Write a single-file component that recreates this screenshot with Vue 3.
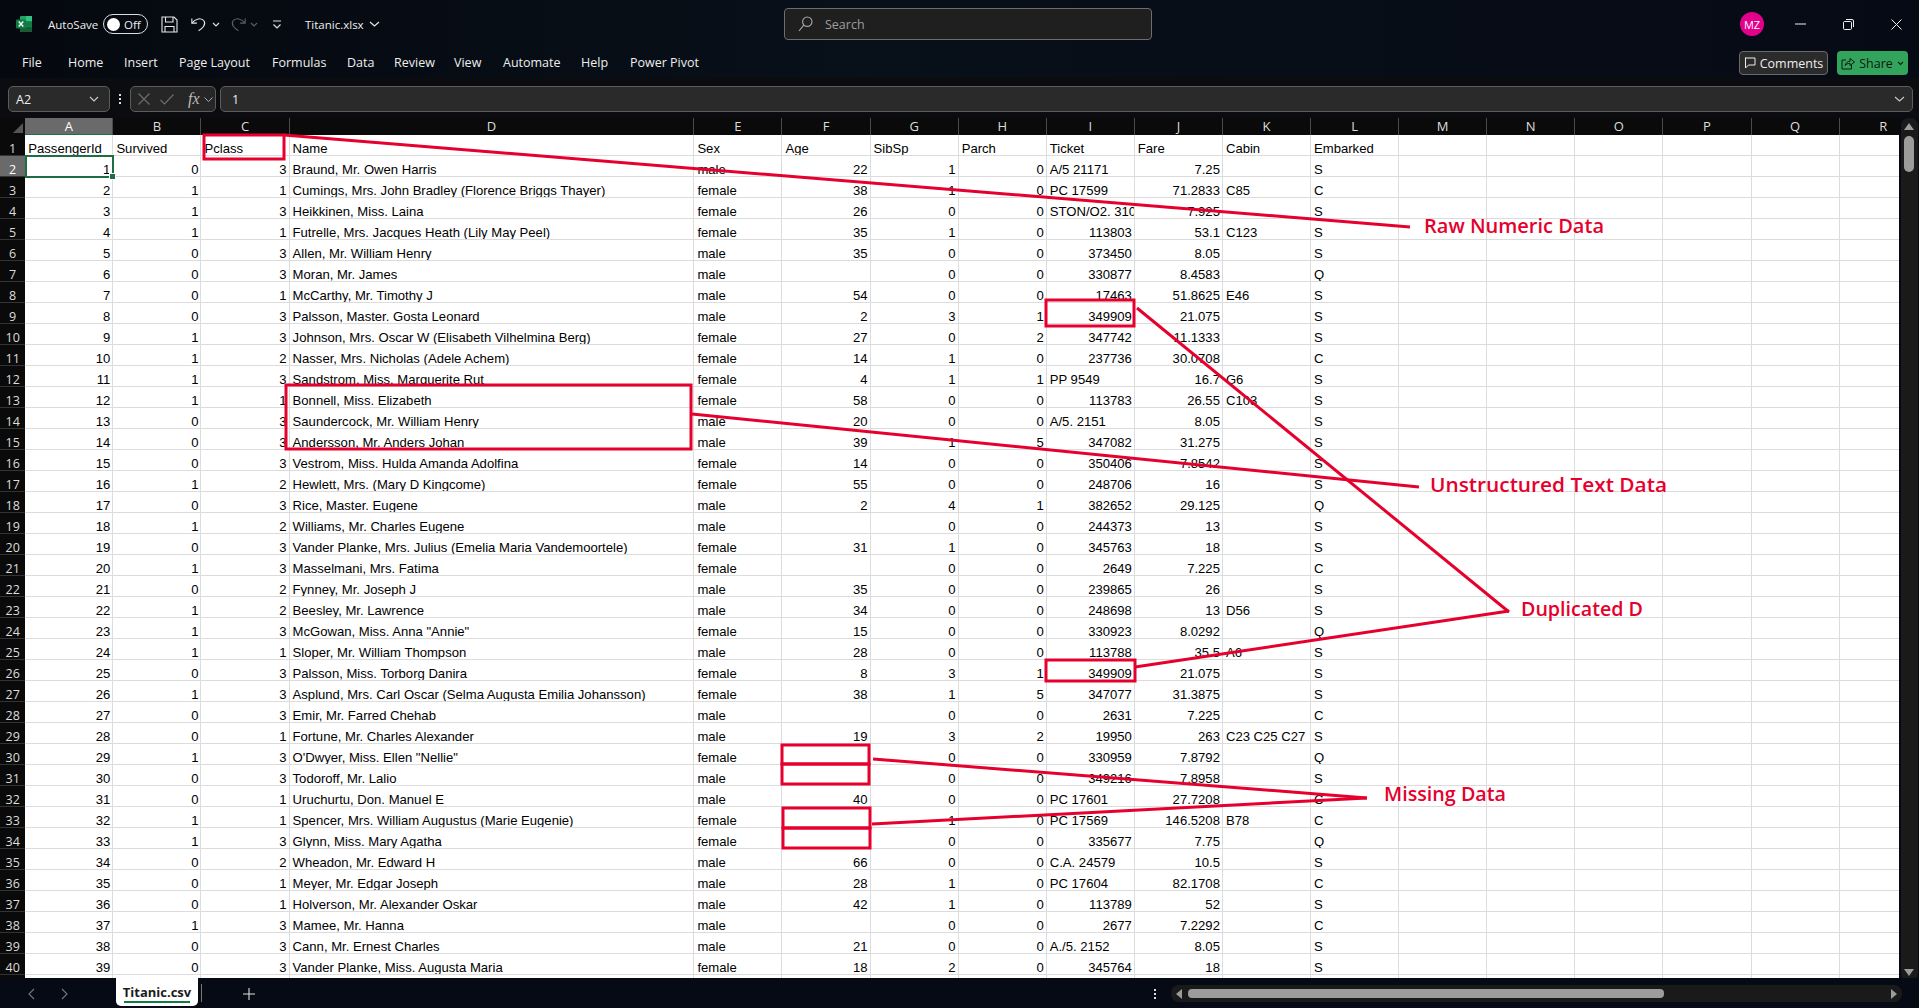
<template>
  <div class="app">
    <!-- title bar -->
    <header class="titlebar">
      <div class="title-left">
        <svg class="xl-logo" width="16" height="16" viewBox="0 0 16 16">
          <rect x="4" y="0" width="12" height="16" rx="1" fill="#21a366" />
          <rect x="10" y="0" width="6" height="5.3" fill="#33c481" />
          <rect x="4" y="10.7" width="12" height="5.3" rx="1" fill="#185c37" />
          <rect x="10" y="5.3" width="6" height="5.4" fill="#107c41" />
          <rect x="0" y="3.5" width="10" height="9" rx="1" fill="#107c41" />
          <path d="M2.7 5.5 L7.3 10.5 M7.3 5.5 L2.7 10.5" stroke="#fff" stroke-width="1.3" />
        </svg>
        <span class="autosave">AutoSave</span>
        <div class="toggle"><i class="knob"></i><span>Off</span></div>
        <svg class="save" width="17" height="17" viewBox="0 0 17 17" fill="none" stroke="#e6e6e6" stroke-width="1.1">
          <path d="M1 1 H13 L16 4 V16 H1 Z" />
          <path d="M4.5 1 V6 H12 V1 M4 16 V10.5 H13 V16" />
        </svg>
        <svg class="undo" width="16" height="16" viewBox="0 0 19 17" fill="none" stroke="#e6e6e6" stroke-width="1.3">
          <path d="M1 2 V7.5 H7" />
          <path d="M1.3 7.2 C5 2 12.5 0.5 15.5 5 C18 9 14 13.5 9 16.5" />
        </svg>
        <svg class="chev" width="8" height="5" viewBox="0 0 8 5" fill="none" stroke="#ddd" stroke-width="1.2"><path d="M1 1 L4 4 L7 1" /></svg>
        <svg class="redo" width="16" height="16" viewBox="0 0 19 17" fill="none" stroke="#5c5f66" stroke-width="1.3">
          <path d="M18 2 V7.5 H12" />
          <path d="M17.7 7.2 C14 2 6.5 0.5 3.5 5 C1 9 5 13.5 10 16.5" />
        </svg>
        <svg class="chev dim" width="8" height="5" viewBox="0 0 8 5" fill="none" stroke="#5c5f66" stroke-width="1.2"><path d="M1 1 L4 4 L7 1" /></svg>
        <svg class="custom" width="10" height="9" viewBox="0 0 10 9" fill="none" stroke="#ddd" stroke-width="1.2">
          <path d="M1 1 H9 M1.5 4.5 L5 8 L8.5 4.5" />
        </svg>
        <span class="filename">Titanic.xlsx</span>
        <svg class="chev-file" width="11" height="6" viewBox="0 0 11 6" fill="none" stroke="#e6e6e6" stroke-width="1.2"><path d="M1 1 L5.5 5 L10 1" /></svg>
      </div>
      <div class="search">
        <svg width="15" height="16" viewBox="0 0 15 16" fill="none" stroke="#a8a8a8" stroke-width="1.1">
          <circle cx="9.3" cy="5.7" r="4.7" />
          <path d="M5.8 9.2 L1 15" />
        </svg>
        <span>Search</span>
      </div>
      <div class="title-right">
        <div class="avatar">MZ</div>
        <svg class="win-min" width="11" height="2" viewBox="0 0 11 2"><path d="M0 1 H11" stroke="#eee" stroke-width="1" /></svg>
        <svg class="win-max" width="11" height="11" viewBox="0 0 11 11" fill="none" stroke="#eee" stroke-width="1">
          <rect x="0.5" y="2.5" width="8" height="8" rx="1.2" />
          <path d="M3 0.5 H9 Q10.5 0.5 10.5 2 V8" />
        </svg>
        <svg class="win-close" width="11" height="11" viewBox="0 0 11 11" stroke="#eee" stroke-width="1"><path d="M0.5 0.5 L10.5 10.5 M10.5 0.5 L0.5 10.5" /></svg>
      </div>
    </header>

    <!-- ribbon tabs -->
    <nav class="ribbon">
      <span v-for="t in tabs" :key="t.label" class="tab" :style="{ left: t.x + 'px' }">{{ t.label }}</span>
      <div class="ribbon-actions">
        <button class="btn-comments">
          <svg width="12" height="12" viewBox="0 0 12 12" fill="none" stroke="#eee" stroke-width="1"><path d="M1 1 H11 V8 H4.5 L1.5 11 V1 Z" /></svg>
          Comments
        </button>
        <button class="btn-share">
          <svg width="14" height="13" viewBox="0 0 14 13" fill="none" stroke="#0c1a10" stroke-width="1"><path d="M5 3 H1 V12 H10.5 V8 M4 8.5 C5 5.5 7 4.3 9 4.3 V1.5 L13.5 5 L9 8.5 V6.3 C7 6.3 5.5 7 4 8.5 Z" /></svg>
          Share
          <svg width="7" height="5" viewBox="0 0 7 5" fill="none" stroke="#0c1a10" stroke-width="1.1"><path d="M1 1 L3.5 3.5 L6 1" /></svg>
        </button>
      </div>
    </nav>

    <!-- formula bar -->
    <section class="formula">
      <div class="namebox">
        <span>A2</span>
        <svg width="10" height="6" viewBox="0 0 10 6" fill="none" stroke="#ccc" stroke-width="1.1"><path d="M1 1 L5 5 L9 1" /></svg>
      </div>
      <div class="dots"><i></i><i></i><i></i></div>
      <div class="fxbox">
        <svg width="12" height="12" viewBox="0 0 12 12" stroke="#6f6f6f" stroke-width="1.1"><path d="M0.5 0.5 L11.5 11.5 M11.5 0.5 L0.5 11.5" /></svg>
        <svg width="14" height="11" viewBox="0 0 14 11" fill="none" stroke="#6f6f6f" stroke-width="1.1"><path d="M0.5 6 L4.5 10 L13.5 0.5" /></svg>
        <span class="fx">fx</span>
        <svg width="9" height="5" viewBox="0 0 9 5" fill="none" stroke="#aaa" stroke-width="1"><path d="M0.5 0.5 L4.5 4.5 L8.5 0.5" /></svg>
      </div>
      <div class="fxinput">
        <span>1</span>
        <svg width="11" height="6" viewBox="0 0 11 6" fill="none" stroke="#ccc" stroke-width="1.1"><path d="M1 1 L5.5 5 L10 1" /></svg>
      </div>
    </section>

    <!-- sheet -->
    <main class="sheet">
      <div class="sheet-grid">
        <div class="row-grid col-head">
          <div class="corner"><i></i></div>
          <div v-for="c in letters" :key="c" class="col-label" :class="{ active: c === 'A' }">{{ c }}</div>
        </div>
        <div class="row-grid" v-for="(row, r) in rows" :key="r">
          <div class="row-label" :class="{ active: r === 1 }">{{ r + 1 }}</div>
          <div v-for="(c, i) in letters" :key="c" class="cell" :class="{ num: isNum(row[i]) }">{{ row[i] }}</div>
        </div>
        <div class="selection"><i></i></div>
      </div>
      <div class="vscroll">
        <i class="arrow-up"></i>
        <div class="vthumb"></div>
        <i class="arrow-down"></i>
      </div>
    </main>

    <!-- sheet tabs -->
    <footer class="tabbar">
      <svg class="nav-prev" width="7" height="12" viewBox="0 0 7 12" fill="none" stroke="#777" stroke-width="1.1"><path d="M6 1 L1 6 L6 11" /></svg>
      <svg class="nav-next" width="7" height="12" viewBox="0 0 7 12" fill="none" stroke="#777" stroke-width="1.1"><path d="M1 1 L6 6 L1 11" /></svg>
      <div class="sheet-tab">Titanic.csv</div>
      <div class="tab-sep"></div>
      <svg class="plus" width="12" height="12" viewBox="0 0 12 12" stroke="#ddd" stroke-width="1.1"><path d="M6 0 V12 M0 6 H12" /></svg>
      <div class="hdots"><i></i><i></i><i></i></div>
      <div class="hscroll">
        <i class="arrow-left"></i>
        <div class="hthumb"></div>
        <i class="arrow-right"></i>
      </div>
    </footer>

    <!-- red annotations drawn on top of the sheet -->
    <svg class="notes" width="1919" height="1008" viewBox="0 0 1919 1008" fill="none" stroke="#e6002d" stroke-width="3">
      <rect v-for="b in boxes" :key="b.join()" :x="b[0]" :y="b[1]" :width="b[2]" :height="b[3]" />
      <line v-for="l in lines" :key="l.join()" :x1="l[0]" :y1="l[1]" :x2="l[2]" :y2="l[3]" />
      <text
        v-for="n in labels"
        :key="n.text"
        :x="n.x"
        :y="n.y"
        :textLength="n.w"
        lengthAdjust="spacingAndGlyphs"
        class="note-text"
      >{{ n.text }}</text>
    </svg>
  </div>
</template>

<script setup>
const tabs = [
  { label: "File", x: 22 },
  { label: "Home", x: 68 },
  { label: "Insert", x: 124 },
  { label: "Page Layout", x: 179 },
  { label: "Formulas", x: 272 },
  { label: "Data", x: 347 },
  { label: "Review", x: 394 },
  { label: "View", x: 454 },
  { label: "Automate", x: 503 },
  { label: "Help", x: 581 },
  { label: "Power Pivot", x: 630 },
]

const letters = "ABCDEFGHIJKLMNOPQR".split("")

const csv = `PassengerId|Survived|Pclass|Name|Sex|Age|SibSp|Parch|Ticket|Fare|Cabin|Embarked
1|0|3|Braund, Mr. Owen Harris|male|22|1|0|A/5 21171|7.25||S
2|1|1|Cumings, Mrs. John Bradley (Florence Briggs Thayer)|female|38|1|0|PC 17599|71.2833|C85|C
3|1|3|Heikkinen, Miss. Laina|female|26|0|0|STON/O2. 3101282|7.925||S
4|1|1|Futrelle, Mrs. Jacques Heath (Lily May Peel)|female|35|1|0|113803|53.1|C123|S
5|0|3|Allen, Mr. William Henry|male|35|0|0|373450|8.05||S
6|0|3|Moran, Mr. James|male||0|0|330877|8.4583||Q
7|0|1|McCarthy, Mr. Timothy J|male|54|0|0|17463|51.8625|E46|S
8|0|3|Palsson, Master. Gosta Leonard|male|2|3|1|349909|21.075||S
9|1|3|Johnson, Mrs. Oscar W (Elisabeth Vilhelmina Berg)|female|27|0|2|347742|11.1333||S
10|1|2|Nasser, Mrs. Nicholas (Adele Achem)|female|14|1|0|237736|30.0708||C
11|1|3|Sandstrom, Miss. Marguerite Rut|female|4|1|1|PP 9549|16.7|G6|S
12|1|1|Bonnell, Miss. Elizabeth|female|58|0|0|113783|26.55|C103|S
13|0|3|Saundercock, Mr. William Henry|male|20|0|0|A/5. 2151|8.05||S
14|0|3|Andersson, Mr. Anders Johan|male|39|1|5|347082|31.275||S
15|0|3|Vestrom, Miss. Hulda Amanda Adolfina|female|14|0|0|350406|7.8542||S
16|1|2|Hewlett, Mrs. (Mary D Kingcome)|female|55|0|0|248706|16||S
17|0|3|Rice, Master. Eugene|male|2|4|1|382652|29.125||Q
18|1|2|Williams, Mr. Charles Eugene|male||0|0|244373|13||S
19|0|3|Vander Planke, Mrs. Julius (Emelia Maria Vandemoortele)|female|31|1|0|345763|18||S
20|1|3|Masselmani, Mrs. Fatima|female||0|0|2649|7.225||C
21|0|2|Fynney, Mr. Joseph J|male|35|0|0|239865|26||S
22|1|2|Beesley, Mr. Lawrence|male|34|0|0|248698|13|D56|S
23|1|3|McGowan, Miss. Anna "Annie"|female|15|0|0|330923|8.0292||Q
24|1|1|Sloper, Mr. William Thompson|male|28|0|0|113788|35.5|A6|S
25|0|3|Palsson, Miss. Torborg Danira|female|8|3|1|349909|21.075||S
26|1|3|Asplund, Mrs. Carl Oscar (Selma Augusta Emilia Johansson)|female|38|1|5|347077|31.3875||S
27|0|3|Emir, Mr. Farred Chehab|male||0|0|2631|7.225||C
28|0|1|Fortune, Mr. Charles Alexander|male|19|3|2|19950|263|C23 C25 C27|S
29|1|3|O'Dwyer, Miss. Ellen "Nellie"|female||0|0|330959|7.8792||Q
30|0|3|Todoroff, Mr. Lalio|male||0|0|349216|7.8958||S
31|0|1|Uruchurtu, Don. Manuel E|male|40|0|0|PC 17601|27.7208||C
32|1|1|Spencer, Mrs. William Augustus (Marie Eugenie)|female||1|0|PC 17569|146.5208|B78|C
33|1|3|Glynn, Miss. Mary Agatha|female||0|0|335677|7.75||Q
34|0|2|Wheadon, Mr. Edward H|male|66|0|0|C.A. 24579|10.5||S
35|0|1|Meyer, Mr. Edgar Joseph|male|28|1|0|PC 17604|82.1708||C
36|0|1|Holverson, Mr. Alexander Oskar|male|42|1|0|113789|52||S
37|1|3|Mamee, Mr. Hanna|male||0|0|2677|7.2292||C
38|0|3|Cann, Mr. Ernest Charles|male|21|0|0|A./5. 2152|8.05||S
39|0|3|Vander Planke, Miss. Augusta Maria|female|18|2|0|345764|18||S
`

// last empty line gives row 41, only its top pixels show
const rows = csv.split("\n").map((line) => line.split("|"))

const isNum = (v) => v !== undefined && /^[0-9.]+$/.test(v)

const boxes = [
  [204, 135, 80, 24],
  [286, 385, 405, 64],
  [1046, 300, 88, 26],
  [1046, 660, 89, 21],
  [782, 745, 87, 19],
  [782, 764, 87, 20],
  [783, 808, 87, 20],
  [783, 828, 87, 20],
]

const lines = [
  [284, 135, 1410, 227],
  [692, 414, 1419, 487],
  [1137, 308, 1509, 612],
  [1135, 667, 1509, 611],
  [873, 759, 1367, 798],
  [872, 824, 1367, 798],
]

const labels = [
  { text: "Raw Numeric Data", x: 1424, y: 233, w: 180 },
  { text: "Unstructured Text Data", x: 1430, y: 492, w: 237 },
  { text: "Duplicated D", x: 1521, y: 616, w: 122 },
  { text: "Missing Data", x: 1384, y: 801, w: 122 },
]
</script>

<style>
html,
body {
  margin: 0;
  background: #070b14;
  overflow: hidden;
}
</style>

<style scoped>
.app {
  position: relative;
  width: 1919px;
  height: 1008px;
  overflow: hidden;
  display: flex;
  flex-direction: column;
  background: linear-gradient(90deg, #05080f 0%, #081019 45%, #060a14 100%);
  color: #eee;
  font-family: "Open Sans", "Noto Sans", sans-serif;
  font-size: 12.5px;
}

/* Title bar */

.titlebar {
  height: 48px;
  display: grid;
  grid-template-columns: 784px 368px 1fr;
  align-items: center;
}

.title-left {
  display: flex;
  align-items: center;
  padding-left: 16px;
}

.xl-logo {
  margin-right: 16px;
}

.autosave {
  width: 55px;
  font-size: 11.5px;
}

.toggle {
  width: 40px;
  height: 18px;
  border: 1px solid #ddd;
  border-radius: 10px;
  display: flex;
  align-items: center;
  padding-left: 3px;
  box-sizing: content-box;
  font-size: 11.5px;
  gap: 4px;
}

.knob {
  width: 13px;
  height: 13px;
  border-radius: 50%;
  background: #fff;
}

.save {
  margin-left: 13px;
}

.undo {
  margin-left: 13px;
}

.chev {
  margin-left: 5px;
}

.redo {
  margin-left: 10px;
}

.chev.dim {
  margin-left: 4px;
}

.custom {
  margin-left: 14px;
}

.filename {
  margin-left: 23px;
  font-size: 11.5px;
}

.chev-file {
  margin-left: 5px;
}

.search {
  height: 32px;
  box-sizing: border-box;
  border: 1px solid #6e6e6e;
  border-radius: 4px;
  background: #1f1f1f;
  display: flex;
  align-items: center;
  padding-left: 13px;
  gap: 12px;
  color: #9d9d9d;
  font-size: 12.5px;
}

.title-right {
  position: relative;
  display: flex;
  align-items: center;
  padding-left: 588px;
}

.avatar {
  width: 24px;
  height: 24px;
  border-radius: 50%;
  background: #e3008c;
  color: #fff;
  font-size: 11px;
  display: flex;
  align-items: center;
  justify-content: center;
}

.win-min {
  margin-left: 31px;
}

.win-max {
  margin-left: 37px;
}

.win-close {
  margin-left: 37px;
}

/* Ribbon */

.ribbon {
  position: relative;
  height: 30px;
}

.tab {
  position: absolute;
  top: 6px;
  font-size: 12.5px;
  white-space: nowrap;
}

.ribbon-actions {
  position: absolute;
  right: 11px;
  top: 3px;
  display: flex;
  gap: 9px;
}

.ribbon-actions button {
  height: 24px;
  box-sizing: border-box;
  border-radius: 4px;
  font-family: inherit;
  font-size: 12.5px;
  display: flex;
  align-items: center;
  padding: 0;
}

.btn-comments {
  width: 89px;
  justify-content: center;
  gap: 4px;
  background: #2b2b2b;
  border: 1px solid #6a6a6a;
  color: #eee;
}

.btn-share {
  width: 71px;
  justify-content: center;
  gap: 4px;
  background: #33a45c;
  border: none;
  color: #0c1a10;
}

/* Formula bar */

.formula {
  height: 40px;
  box-sizing: border-box;
  padding: 8px 6px 6px 8px;
  display: flex;
  align-items: stretch;
  background: #0b0c0f;
}

.namebox,
.fxbox,
.fxinput {
  box-sizing: border-box;
  border: 1px solid #5c5c5c;
  border-radius: 5px;
  background: #2a2a2a;
  display: flex;
  align-items: center;
}

.namebox {
  width: 102px;
  justify-content: space-between;
  padding: 0 10px 0 7px;
  font-size: 12.5px;
}

.dots {
  width: 20px;
  display: flex;
  flex-direction: column;
  align-items: center;
  justify-content: center;
  gap: 2px;
}

.dots i,
.hdots i {
  width: 2px;
  height: 2px;
  background: #ddd;
}

.fxbox {
  width: 86px;
  padding-left: 7px;
  gap: 10px;
  background: #262626;
}

.fx {
  font-family: "Liberation Serif", serif;
  font-style: italic;
  font-size: 16px;
  color: #bbb;
  margin-left: 4px;
  margin-right: -6px;
}

.fxinput {
  flex: 1;
  margin-left: 4px;
  padding: 0 7px 0 11px;
  justify-content: space-between;
  font-size: 12.5px;
}

/* Sheet */

.sheet {
  height: 860px;
  flex-shrink: 0;
  position: relative;
  display: flex;
  overflow: hidden;
}

.sheet-grid {
  position: relative;
  width: 1899px;
  height: 860px;
  overflow: hidden;
  background: #fff;
}

.row-grid {
  display: grid;
  grid-template-columns: 25.3px repeat(3, 88.1px) 404.8px repeat(14, 88.1px);
  grid-template-rows: 21px;
  height: 21px;
}

.col-head {
  grid-template-rows: 17px;
  height: 17px;
  background: #0a0a0a;
}

.corner {
  position: relative;
}

.corner i {
  position: absolute;
  right: 2px;
  bottom: 2px;
  border-left: 10px solid transparent;
  border-bottom: 10px solid #555;
}

.col-label {
  box-sizing: border-box;
  border-right: 1px solid #4a4a4a;
  color: #ddd;
  font-size: 13px;
  line-height: 17px;
  text-align: center;
}

.col-label.active {
  background: #6a6a6a;
  color: #fff;
  border-bottom: 1px solid #1f7246;
}

.row-label {
  background: #0a0a0a;
  color: #ddd;
  font-size: 12.5px;
  line-height: 21px;
  padding-top: 3px;
  text-align: center;
  border-bottom: 1px solid #333;
  box-sizing: border-box;
  overflow: hidden;
}

.row-label.active {
  background: #6a6a6a;
  color: #fff;
}

.cell {
  box-sizing: border-box;
  border-right: 1px solid #dcdcdc;
  border-bottom: 1px solid #dcdcdc;
  padding: 3px 2px 0 3px;
  color: #000;
  font-family: "Liberation Sans", Arial, sans-serif;
  font-size: 13.1px;
  line-height: 21px;
  white-space: nowrap;
  overflow: hidden;
}

.cell.num {
  text-align: right;
}

.selection {
  position: absolute;
  left: 25px;
  top: 37px;
  width: 89px;
  height: 23px;
  box-sizing: border-box;
  border: 2px solid #1f6e43;
}

.selection i {
  position: absolute;
  right: -4px;
  bottom: -4px;
  width: 5px;
  height: 5px;
  background: #1f6e43;
  border: 1px solid #fff;
}

.vscroll {
  position: relative;
  width: 20px;
  height: 863px;
}

.vscroll::before {
  content: "";
  position: absolute;
  left: 2px;
  right: 1px;
  top: 0;
  bottom: 0;
  border-radius: 8px;
  background: #1a1a1a;
}

.vthumb {
  position: absolute;
  left: 5px;
  top: 18px;
  width: 10px;
  height: 36px;
  border-radius: 5px;
  background: #9c9c9c;
}

.arrow-up,
.arrow-down {
  position: absolute;
  left: 5px;
  border-left: 5px solid transparent;
  border-right: 5px solid transparent;
}

.arrow-up {
  top: 5px;
  border-bottom: 7px solid #9c9c9c;
}

.arrow-down {
  top: 851px;
  border-top: 7px solid #9c9c9c;
}

/* Sheet tabs */

.tabbar {
  position: relative;
  flex: 1;
  background: #050a14;
}

.nav-prev,
.nav-next,
.plus,
.hdots,
.sheet-tab,
.tab-sep,
.hscroll {
  position: absolute;
}

.nav-prev {
  left: 28px;
  top: 10px;
}

.nav-next {
  left: 61px;
  top: 10px;
}

.sheet-tab {
  left: 116px;
  top: 0;
  width: 82px;
  height: 28px;
  box-sizing: border-box;
  background: #fff;
  border-radius: 0 0 5px 5px;
  color: #1c1c1c;
  font-weight: 700;
  font-size: 13px;
  text-align: center;
  line-height: 28px;
}

.sheet-tab::after {
  content: "";
  position: absolute;
  left: 8px;
  right: 8px;
  bottom: 3px;
  height: 2px;
  background: #107c41;
}

.tab-sep {
  left: 201px;
  top: 6px;
  width: 1px;
  height: 18px;
  background: #777;
}

.plus {
  left: 243px;
  top: 10px;
}

.hdots {
  left: 1154px;
  top: 11px;
  display: flex;
  flex-direction: column;
  gap: 2px;
}

.hscroll {
  left: 1171px;
  top: 7px;
  width: 731px;
  height: 17px;
  background: #1a1a1a;
  border-radius: 8px;
}

.hthumb {
  position: absolute;
  left: 17px;
  top: 4px;
  width: 476px;
  height: 9px;
  border-radius: 4px;
  background: #9c9c9c;
}

.arrow-left,
.arrow-right {
  position: absolute;
  top: 4px;
  border-top: 5px solid transparent;
  border-bottom: 5px solid transparent;
}

.arrow-left {
  left: 5px;
  border-right: 6px solid #9c9c9c;
}

.arrow-right {
  right: 5px;
  border-left: 6px solid #9c9c9c;
}

/* Annotations */

.notes {
  position: absolute;
  left: 0;
  top: 0;
  pointer-events: none;
}

.note-text {
  fill: #e6002d;
  stroke: none;
  font-family: "Open Sans", "Noto Sans", sans-serif;
  font-weight: 600;
  font-size: 19px;
}
</style>
